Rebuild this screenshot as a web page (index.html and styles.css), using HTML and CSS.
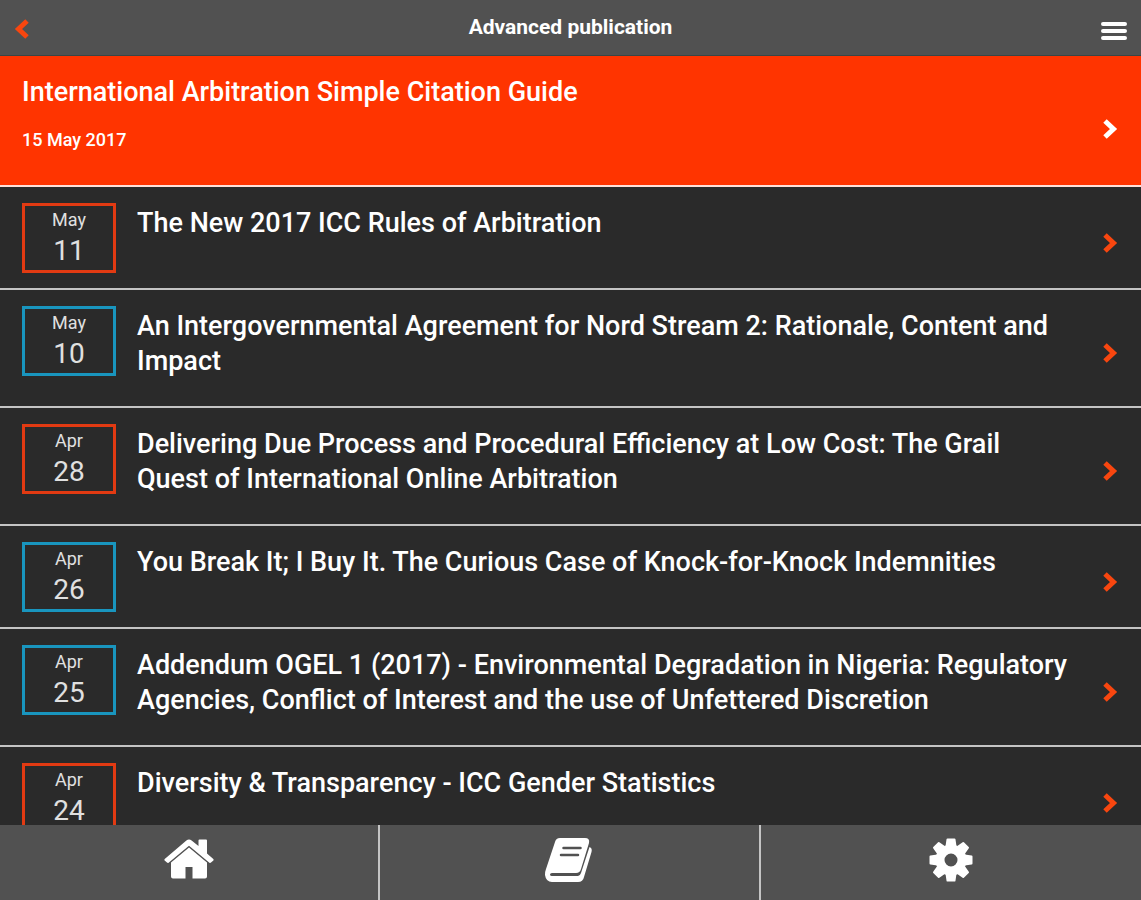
FILE: index.html
```html
<!DOCTYPE html>
<html lang="en">
<head>
    <meta charset="utf-8">
    <title>Advanced publication</title>
    <meta name="viewport" content="width=device-width, initial-scale=1.0">
    <link rel="stylesheet" href="styles.css">
</head>
<body>
<!-- shared arrow -->
<svg class="defs" width="0" height="0" aria-hidden="true">
    <symbol id="chevron" viewBox="0 0 16 22">
        <path d="M3 3 11.500 11 3 19" fill="none" stroke="currentColor" stroke-width="5"/>
    </symbol>
</svg>

<header class="topbar">
    <button type="button" class="barbtn" aria-label="Back">
        <svg class="chevron back"><use href="#chevron"/></svg>
    </button>
    <h1 class="pagetitle">Advanced publication</h1>
    <button type="button" class="barbtn" aria-label="Menu">
        <svg class="burger" viewBox="0 0 26 20"><path d="M2 3h22M2 10h22M2 17h22" stroke="currentColor" stroke-width="4" stroke-linecap="round"/></svg>
    </button>
</header>

<main class="list">
    <a href="#" class="row featured">
        <div class="lead">
            <h2 class="title">International Arbitration Simple Citation Guide</h2>
            <time class="date" datetime="2017-05-15">15 May 2017</time>
        </div>
        <svg class="chevron"><use href="#chevron"/></svg>
    </a>
    <a href="#" class="row">
        <time class="badge red" datetime="2017-05-11"><span class="month">May</span><span class="day">11</span></time>
        <h2 class="title">The New 2017 ICC Rules of Arbitration</h2>
        <svg class="chevron"><use href="#chevron"/></svg>
    </a>
    <a href="#" class="row">
        <time class="badge blue" datetime="2017-05-10"><span class="month">May</span><span class="day">10</span></time>
        <h2 class="title">An Intergovernmental Agreement for Nord Stream 2: Rationale, Content and Impact</h2>
        <svg class="chevron"><use href="#chevron"/></svg>
    </a>
    <a href="#" class="row">
        <time class="badge red" datetime="2017-04-28"><span class="month">Apr</span><span class="day">28</span></time>
        <h2 class="title">Delivering Due Process and Procedural Efficiency at Low Cost: The Grail Quest of International Online Arbitration</h2>
        <svg class="chevron"><use href="#chevron"/></svg>
    </a>
    <a href="#" class="row">
        <time class="badge blue" datetime="2017-04-26"><span class="month">Apr</span><span class="day">26</span></time>
        <h2 class="title">You Break It; I Buy It. The Curious Case of Knock-for-Knock Indemnities</h2>
        <svg class="chevron"><use href="#chevron"/></svg>
    </a>
    <a href="#" class="row">
        <time class="badge blue" datetime="2017-04-25"><span class="month">Apr</span><span class="day">25</span></time>
        <h2 class="title">Addendum OGEL 1 (2017) - Environmental Degradation in Nigeria: Regulatory Agencies, Conflict of Interest and the use of Unfettered Discretion</h2>
        <svg class="chevron"><use href="#chevron"/></svg>
    </a>
    <a href="#" class="row">
        <time class="badge red" datetime="2017-04-24"><span class="month">Apr</span><span class="day">24</span></time>
        <h2 class="title">Diversity &amp; Transparency - ICC Gender Statistics</h2>
        <svg class="chevron"><use href="#chevron"/></svg>
    </a>
</main>

<nav class="tabs">
    <a href="#" class="tab" aria-label="Home">
        <svg class="icon" viewBox="0 0 50 46">
            <path d="M25 10.500 43 25.500V39.500q0 2-2 2H28.500V30h-7v11.500H9q-2 0-2-2V25.500z" fill="currentColor"/>
            <path d="M25 2.500q1.400 0 2.600 1L34.500 9V3.500q0-1 1-1H42q1 0 1 1V16.500L49.300 22q.7.700.1 1.500L47 25.600q-.8.800-1.600.1L25 8.800 4.600 25.700q-.8.700-1.600-.1L.6 23.500q-.6-.8.100-1.500L22.400 3.500q1.200-1 2.600-1z" fill="currentColor"/>
        </svg>
    </a>
    <a href="#" class="tab" aria-label="Publications">
        <svg class="icon" viewBox="0 0 50 46">
            <path d="M16 1h25q5 0 4 5l-8 26q-1 4-5 4H8q-2 0-2 1.500T9 39h25q2 0 3-3l8.500-26q3 1 2 5L40 40q-1 5-6 5H8q-6 0-7-7-.2-3 1-6L11 5q1-4 5-4z" fill="currentColor"/>
            <path d="M19.500 11h17M17 18h17" stroke="#515151" stroke-width="2.500" stroke-linecap="round"/>
        </svg>
    </a>
    <a href="#" class="tab" aria-label="Settings">
        <svg class="icon" viewBox="0 0 50 46">
            <circle cx="25" cy="23" r="11" fill="none" stroke="currentColor" stroke-width="9"/>
            <path d="M21.500 2.500h7l1 7h-9zM21.500 43.500h7l1-7h-9zM4.500 19.500v7l7 1v-9zM45.500 19.500v7l-7 1v-9zM12.800 6 8 10.800l3.500 5 6.300-6.300zM37.200 6 42 10.800l-3.500 5-6.300-6.300zM12.800 40 8 35.200l3.500-5 6.300 6.300zM37.200 40l4.800-4.800-3.500-5-6.300 6.300z" fill="currentColor" stroke="currentColor" stroke-width="2" stroke-linejoin="round"/>
        </svg>
    </a>
</nav>
</body>
</html>
```
FILE: styles.css
```css
* {
    box-sizing: border-box;
}

body {
    display: flex;
    flex-direction: column;
    height: 100vh;
    margin: 0;
    background: #2a2a2a;
    color: #fff;
    font-family: Roboto, "Liberation Sans", sans-serif;
}

a {
    color: inherit;
    text-decoration: none;
}

h1, h2 {
    margin: 0;
}

.defs {
    position: absolute;
}

/* top bar */
.topbar {
    display: flex;
    flex: none;
    align-items: center;
    justify-content: space-between;
    height: 56px;
    padding: 0 14px 2px;
    background: #515151;
    border-bottom: 1px solid #394545;
}

.barbtn {
    display: flex;
    flex: 1;
    padding: 4px 0 0;
    border: 0;
    background: none;
    color: #fff;
    cursor: pointer;
}

.barbtn:last-child {
    justify-content: flex-end;
    padding-top: 8px;
}

.pagetitle {
    font-size: 21px;
    line-height: 32px;
    font-weight: 700;
}

.burger {
    width: 26px;
    height: 20px;
}

.chevron {
    flex: none;
    width: 16px;
    height: 22px;
    color: #f8460f;
}

.back {
    transform: rotate(180deg);
}

/* publications */
.list {
    flex: 1;
    min-height: 0;
    overflow-y: auto;
    scrollbar-width: none;
}

.row {
    display: flex;
    align-items: flex-start;
    padding: 16px 23px 15px 22px;
    border-bottom: 2px solid #c4c4c4;
}

.row .chevron {
    align-self: center;
    margin-top: 9px;
}

.title {
    flex: 1;
    padding: 3px 28px 12px 0;
    font-size: 27px;
    line-height: 35px;
    font-weight: 500;
}

.featured {
    padding-bottom: 28px;
    background: #ff3400;
    border-bottom-color: #ffe0d8;
}

.featured .chevron {
    margin-top: 28px;
    color: #fff;
}

.lead {
    flex: 1;
}

.date {
    display: block;
    font-size: 18px;
    line-height: 35px;
    font-weight: 500;
}

.badge {
    display: flex;
    flex: none;
    flex-direction: column;
    width: 94px;
    height: 70px;
    margin-right: 21px;
    border: 3px solid;
    text-align: center;
}

.red {
    border-color: #e23a12;
}

.blue {
    border-color: #1995be;
}

.month, .day {
    color: #e0e0e0;
}

.month {
    font-size: 18px;
    line-height: 27px;
}

.day {
    font-size: 28px;
    line-height: 35px;
}

/* bottom tabs */
.tabs {
    display: grid;
    flex: none;
    grid-template-columns: repeat(3, 1fr);
    height: 75px;
    background: #515151;
}

.tab {
    display: flex;
    align-items: center;
    justify-content: center;
    padding-bottom: 5px;
}

.tab:not(:last-child) {
    border-right: 2px solid #c4c4c4;
}

.icon {
    width: 50px;
    height: 46px;
}
```
